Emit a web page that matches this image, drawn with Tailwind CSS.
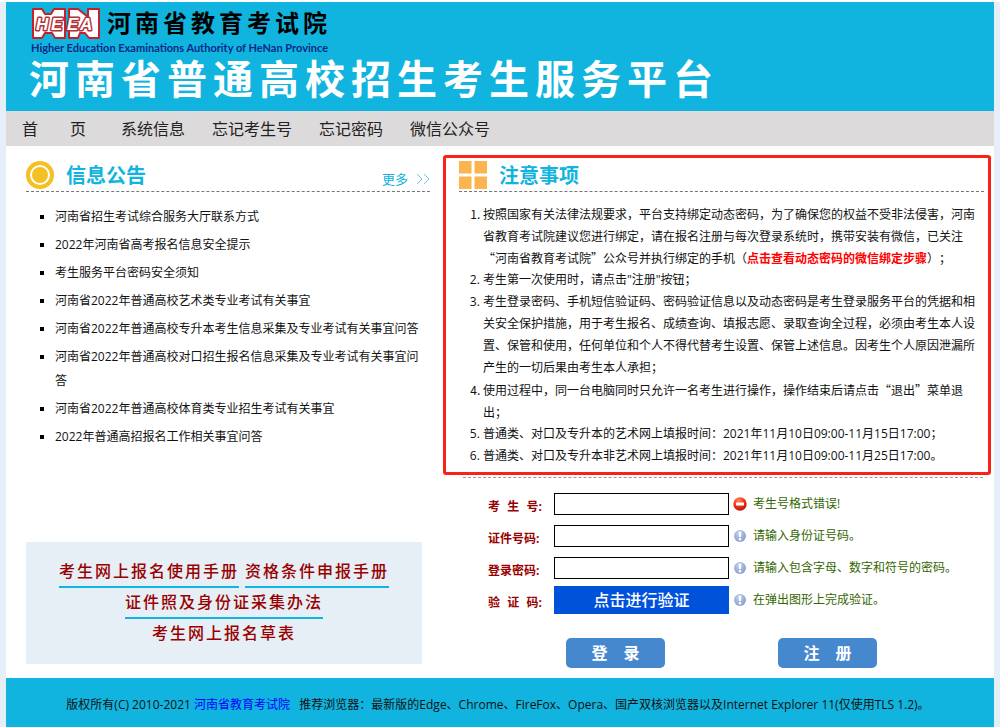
<!DOCTYPE html>
<html lang="zh-CN">
<head>
<meta charset="utf-8">
<meta name="viewport" content="width=device-width, initial-scale=1">
<title>河南省普通高校招生考生服务平台</title>
<script src="https://cdn.jsdelivr.net/npm/@tailwindcss/browser@4"></script>
</head>
<body class="min-h-screen bg-[#e6eef7] text-xs text-[#111] font-['Open_Sans','Noto_Sans_CJK_SC',sans-serif]">
<svg class="absolute size-0" aria-hidden="true">
  <defs>
    <radialGradient id="blueBall" cx="0.4" cy="0.3" r="0.8"><stop offset="0" stop-color="#c3cee9"/><stop offset="1" stop-color="#7f97cb"/></radialGradient>
    <radialGradient id="redBall" cx="0.4" cy="0.25" r="0.8"><stop offset="0" stop-color="#ff8a5c"/><stop offset="0.5" stop-color="#f4341a"/><stop offset="1" stop-color="#b51207"/></radialGradient>
  </defs>
  <symbol id="info" viewBox="0 0 14 14">
    <circle cx="7" cy="7" r="6" fill="url(#blueBall)"/>
    <path d="M5.6 2.4h2.8L8 8H6z" fill="#fff"/><circle cx="7" cy="10.2" r="1.3" fill="#fff"/>
  </symbol>
  <symbol id="error" viewBox="0 0 14 14">
    <circle cx="7" cy="7" r="6.700" fill="url(#redBall)"/>
    <rect x="3" y="5.5" width="8" height="3" rx="0.5" fill="#fff"/>
  </symbol>
</svg>
<div class="border-t-2 border-white">
<div class="mx-1.5 flex min-h-[725px] flex-col bg-white">
  <header class="h-[109px] bg-[#10b4de] pl-[23px] pt-1">
    <div class="flex items-center gap-1.5">
      <svg class="ml-0.5 h-[34px] w-[70px]" viewBox="0 0 70 34" role="img" aria-label="HEEA">
        <g fill="#fff" stroke="#c2222b" stroke-width="2" stroke-linejoin="round">
          <path d="M2 3H11L14 8H20L23 3H34V32H24L21 27H14L11 32H2Z"/>
          <path d="M38 3H47L57 11V3H68V32H58L54 27H49L47 32H38Z"/>
        </g>
        <g font-family="Liberation Sans" font-style="italic" font-weight="bold" font-size="17" fill="#fff" stroke="#b3323a" stroke-width="3" stroke-linejoin="round" paint-order="stroke">
          <text x="5" y="24">H</text><text x="20" y="24">E</text><text x="36" y="24">E</text><text x="49" y="24">A</text>
        </g>
      </svg>
      <span class="text-2xl leading-[34px] font-bold tracking-[4px] text-black">河南省教育考试院</span>
    </div>
    <p class="pl-0.5 text-[11px] leading-4 font-bold text-[#0a2a86] font-['Lato','Noto_Sans_CJK_SC',sans-serif]">Higher Education Examinations Authority of HeNan Province</p>
    <h1 class="text-[40px] leading-[46px] font-bold tracking-[6px] text-white">河南省普通高校招生考生服务平台</h1>
  </header>

  <nav class="flex h-[35px] items-center gap-[27px] bg-[#dcdadb] pl-4 text-base text-[#222]">
    <a href="#" class="mr-2">首　　页</a>
    <a href="#">系统信息</a>
    <a href="#">忘记考生号</a>
    <a href="#">忘记密码</a>
    <a href="#">微信公众号</a>
  </nav>

  <main class="grid flex-1 grid-cols-[404fr_548fr] gap-[13px] pt-[9px] pr-[3px] pl-5">
    <section class="flex flex-col pt-[3px]">
      <div class="flex h-[34px] items-center border-b border-dashed border-[#777]">
        <svg class="h-7 w-7" viewBox="0 0 28 28" aria-hidden="true"><circle cx="14" cy="14" r="12" fill="#fff" stroke="#f5c023" stroke-width="4"/><circle cx="14" cy="14" r="8" fill="#f5c023"/></svg>
        <h2 class="ml-3 pt-0.5 text-xl font-bold text-[#10b4de]">信息公告</h2>
        <a href="#" class="mt-2.5 ml-auto flex items-center gap-2 text-[13px] text-[#10b4de]">更多
          <svg class="h-3 w-3.5" viewBox="0 0 14 12" fill="none" stroke="#6cc5e2" aria-hidden="true"><path d="M1 1l5 5-5 5M8 1l5 5-5 5"/></svg>
        </a>
      </div>
      <ul class="mt-[13px] mr-1.5 list-none space-y-1 leading-6">
        <li class="flex gap-[11px] pl-3.5"><i class="mt-2.5 size-1 shrink-0 bg-black"></i><a href="#">河南省招生考试综合服务大厅联系方式</a></li>
        <li class="flex gap-[11px] pl-3.5"><i class="mt-2.5 size-1 shrink-0 bg-black"></i><a href="#">2022年河南省高考报名信息安全提示</a></li>
        <li class="flex gap-[11px] pl-3.5"><i class="mt-2.5 size-1 shrink-0 bg-black"></i><a href="#">考生服务平台密码安全须知</a></li>
        <li class="flex gap-[11px] pl-3.5"><i class="mt-2.5 size-1 shrink-0 bg-black"></i><a href="#">河南省2022年普通高校艺术类专业考试有关事宜</a></li>
        <li class="flex gap-[11px] pl-3.5"><i class="mt-2.5 size-1 shrink-0 bg-black"></i><a href="#">河南省2022年普通高校专升本考生信息采集及专业考试有关事宜问答</a></li>
        <li class="flex gap-[11px] pl-3.5"><i class="mt-2.5 size-1 shrink-0 bg-black"></i><a href="#">河南省2022年普通高校对口招生报名信息采集及专业考试有关事宜问答</a></li>
        <li class="flex gap-[11px] pl-3.5"><i class="mt-2.5 size-1 shrink-0 bg-black"></i><a href="#">河南省2022年普通高校体育类专业招生考试有关事宜</a></li>
        <li class="flex gap-[11px] pl-3.5"><i class="mt-2.5 size-1 shrink-0 bg-black"></i><a href="#">2022年普通高招报名工作相关事宜问答</a></li>
      </ul>
      <div class="mt-auto mr-2 mb-3.5 flex h-[122px] flex-col items-center bg-[#e6eef6] pt-[15px] text-base leading-[29px] font-medium tracking-[2px] text-[#990000]">
        <div class="flex gap-1.5">
          <a href="#" class="border-b-2 border-[#10b4de]">考生网上报名使用手册</a>
          <a href="#" class="border-b-2 border-[#10b4de]">资格条件申报手册</a>
        </div>
        <a href="#" class="border-b-2 border-[#10b4de]">证件照及身份证采集办法</a>
        <a href="#">考生网上报名草表</a>
      </div>
    </section>

    <div class="flex flex-col">
      <section class="rounded-[3px] border-3 border-[#fb2115] pr-1 pb-[5px] pl-[13px]">
        <div class="flex h-[34px] items-center border-b border-dashed border-[#777]">
          <svg class="h-7 w-7" viewBox="0 0 28 28" fill="#fbb44f" aria-hidden="true"><path d="M0 0h12.500v12.500H0zM15.500 0H28v12.500H15.500zM0 15.500h12.500V28H0zM15.500 15.500H28V28H15.500z"/></svg>
          <h2 class="ml-3 pt-0.5 text-xl font-bold text-[#10b4de]">注意事项</h2>
        </div>
        <ol class="mt-[11px] mr-1 list-decimal pl-6 leading-[22px] [text-spacing-trim:space-all]">
          <li class="font-['Noto_Sans_CJK_SC',sans-serif]">按照国家有关法律法规要求，平台支持绑定动态密码，为了确保您的权益不受非法侵害，河南省教育考试院建议您进行绑定，请在报名注册与每次登录系统时，携带安装有微信，已关注“河南省教育考试院”公众号并执行绑定的手机（<a href="#" class="font-bold text-[#ff0000]">点击查看动态密码的微信绑定步骤</a>）；</li>
          <li>考生第一次使用时，请点击"注册"按钮；</li>
          <li>考生登录密码、手机短信验证码、密码验证信息以及动态密码是考生登录服务平台的凭据和相关安全保护措施，用于考生报名、成绩查询、填报志愿、录取查询全过程，必须由考生本人设置、保管和使用，任何单位和个人不得代替考生设置、保管上述信息。因考生个人原因泄漏所产生的一切后果由考生本人承担；</li>
          <li class="font-['Noto_Sans_CJK_SC',sans-serif]">使用过程中，同一台电脑同时只允许一名考生进行操作，操作结束后请点击“退出”菜单退出；</li>
          <li>普通类、对口及专升本的艺术网上填报时间：2021年11月10日09:00-11月15日17:00；</li>
          <li>普通类、对口及专升本非艺术网上填报时间：2021年11月10日09:00-11月25日17:00。</li>
        </ol>
      </section>

      <form class="mr-2 mt-0.5 ml-5 border-t border-dashed border-[#999] pt-2.5" onsubmit="return false">
        <div class="grid auto-rows-[32px] grid-cols-[66px_175px_1fr] items-center pl-[25px]">
          <label for="ksh" class="flex w-[54px] justify-between pt-1.5 font-bold text-[#990000]"><span>考</span><span>生</span><span>号:</span></label>
          <input id="ksh" type="text" class="h-[22px] w-full border border-black bg-white px-1">
          <p class="flex items-center gap-1.5 pl-1 text-[#336600]"><svg class="size-3.5" aria-hidden="true"><use href="#error"/></svg>考生号格式错误!</p>

          <label for="zjh" class="pt-1.5 font-bold whitespace-nowrap text-[#990000]">证件号码:</label>
          <input id="zjh" type="text" class="h-[22px] w-full border border-black bg-white px-1">
          <p class="flex items-center gap-1.5 pl-1 text-[#336600]"><svg class="size-3.5" aria-hidden="true"><use href="#info"/></svg>请输入身份证号码。</p>

          <label for="mm" class="pt-1.5 font-bold whitespace-nowrap text-[#990000]">登录密码:</label>
          <input id="mm" type="password" class="h-[22px] w-full border border-black bg-white px-1">
          <p class="flex items-center gap-1.5 pl-1 text-[#336600]"><svg class="size-3.5" aria-hidden="true"><use href="#info"/></svg>请输入包含字母、数字和符号的密码。</p>

          <label for="yzm" class="flex w-[54px] justify-between pt-1.5 font-bold text-[#990000]"><span>验</span><span>证</span><span>码:</span></label>
          <button id="yzm" type="button" class="h-7 w-full bg-[#0052d9] text-base leading-7 font-medium text-white">点击进行验证</button>
          <p class="flex items-center gap-1.5 pl-1 text-[#336600]"><svg class="size-3.5" aria-hidden="true"><use href="#info"/></svg>在弹出图形上完成验证。</p>
        </div>
        <div class="mt-[22px] flex gap-[113px] pl-[103px]">
          <button type="submit" class="h-[30px] w-[99px] rounded-[5px] bg-[#4688ce] text-base leading-[30px] font-bold text-white">登　录</button>
          <button type="button" class="h-[30px] w-[99px] rounded-[5px] bg-[#4688ce] text-base leading-[30px] font-bold text-white">注　册</button>
        </div>
      </form>
    </div>
  </main>

  <footer class="flex h-[49px] items-center justify-center bg-[#10b4de] pt-1 pr-1 whitespace-pre">版权所有(C) 2010-2021 <a href="#" class="text-[#0000ff]">河南省教育考试院</a>   推荐浏览器：最新版的Edge、Chrome、FireFox、Opera、国产双核浏览器以及Internet Explorer 11(仅使用TLS 1.2)。</footer>
</div>
</div>
</body>
</html>
